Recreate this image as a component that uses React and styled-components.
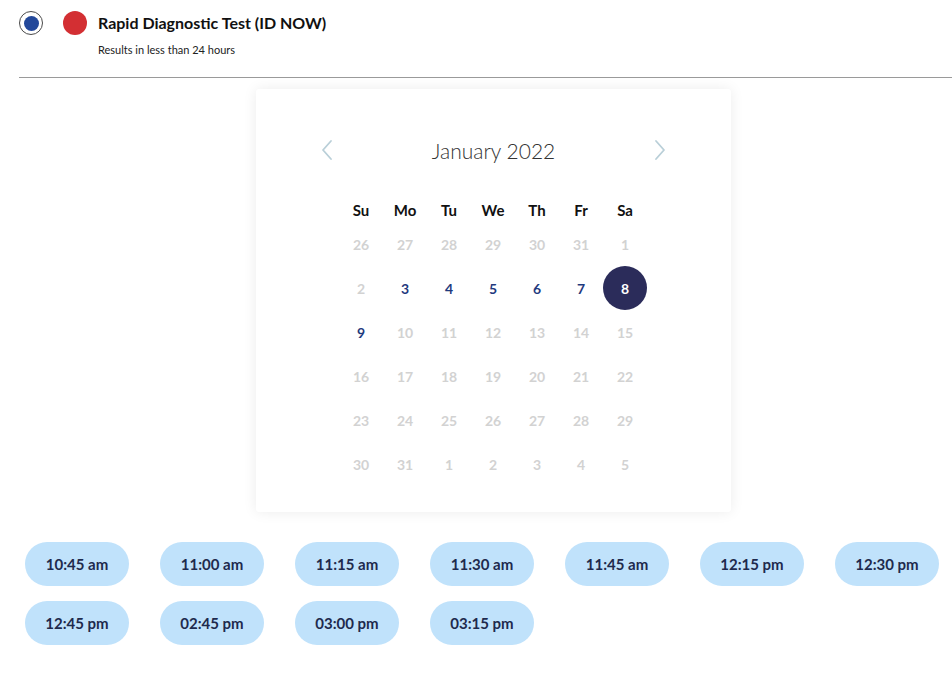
import styled, { createGlobalStyle } from "styled-components";

const GlobalStyle = createGlobalStyle`
  body {
    margin: 0;
    background: #ffffff;
    font-family: "Source Sans Pro", Lato, "Liberation Sans", sans-serif;
    color: #111;
  }
`;

// Test option header
const OptionRow = styled.div`
  display: flex;
  align-items: flex-start;
  padding: 11px 0 0 19px;
`;

const Radio = styled.span`
  box-sizing: border-box;
  width: 24px;
  height: 24px;
  border-radius: 50%;
  border: 1.5px solid #4a4a4a;
  display: flex;
  align-items: center;
  justify-content: center;
  flex-shrink: 0;

  &::after {
    content: "";
    width: 15px;
    height: 15px;
    border-radius: 50%;
    background: #23489a;
  }
`;

const Dot = styled.span`
  width: 24px;
  height: 24px;
  border-radius: 50%;
  background: #d32f33;
  margin-left: 20px;
  flex-shrink: 0;
`;

const OptionText = styled.div`
  margin-left: 11px;
`;

const Title = styled.div`
  font-size: 16px;
  font-weight: 700;
  line-height: 24px;
  color: #111;
`;

const Subtitle = styled.div`
  font-size: 11px;
  line-height: 14px;
  margin-top: 8px;
  color: #222;
`;

const Divider = styled.hr`
  border: none;
  border-top: 1px solid #9a9a9a;
  margin: 20px 0 0 19px;
`;

// Calendar
const CardWrap = styled.div`
  padding: 11px 0 0 256px;
`;

const Card = styled.div`
  width: 475px;
  box-sizing: border-box;
  padding: 39px 83px 26px;
  background: #fff;
  border-radius: 3px;
  box-shadow: 0 0 14px rgba(0, 0, 0, 0.08);
`;

const MonthHeader = styled.div`
  height: 44px;
  display: flex;
  align-items: center;
  justify-content: space-between;
`;

const NavButton = styled.button`
  border: none;
  background: none;
  padding: 0;
  width: 14px;
  height: 22px;
  display: flex;
  align-items: center;
  justify-content: center;
  margin: 0 ${(p) => p.$edge}px;
  cursor: pointer;
`;

const MonthLabel = styled.div`
  font-size: 21px;
  font-weight: 300;
  color: #333;
`;

const Grid = styled.div`
  display: grid;
  grid-template-columns: repeat(7, 44px);
  grid-auto-rows: 44px;
`;

const WeekRow = styled(Grid)`
  grid-auto-rows: 25px;
  margin-top: 25px;
`;

const WeekDay = styled.div`
  display: flex;
  align-items: center;
  justify-content: center;
  font-size: 15px;
  font-weight: 700;
  color: #111;
`;

const Day = styled.div`
  display: flex;
  align-items: center;
  justify-content: center;
  border-radius: 50%;
  font-size: 14px;
  font-weight: 700;
  color: ${(p) => (p.$selected ? "#fff" : p.$active ? "#1f3a7e" : "#d2d2d2")};
  background: ${(p) => (p.$selected ? "#2b2c5a" : "transparent")};
`;

// Time slots
const Slots = styled.div`
  display: flex;
  flex-wrap: wrap;
  column-gap: 31px;
  row-gap: 15px;
  padding: 30px 0 0 25px;
`;

const Slot = styled.button`
  width: 104px;
  height: 44px;
  border: none;
  border-radius: 22px;
  background: #c0e2fb;
  color: #1e2a4d;
  font-family: inherit;
  font-size: 15px;
  font-weight: 700;
  cursor: pointer;
`;

function Chevron({ dir }) {
  return (
    <svg width="12" height="22" viewBox="0 0 12 22" fill="none">
      <polyline
        points={dir === "left" ? "10,2 2,11 10,20" : "2,2 10,11 2,20"}
        stroke="#b9cfd8"
        strokeWidth="1.8"
        strokeLinecap="round"
        strokeLinejoin="round"
      />
    </svg>
  );
}

const weekDays = ["Su", "Mo", "Tu", "We", "Th", "Fr", "Sa"];

const days = [
  26, 27, 28, 29, 30, 31, 1,
  2, 3, 4, 5, 6, 7, 8,
  9, 10, 11, 12, 13, 14, 15,
  16, 17, 18, 19, 20, 21, 22,
  23, 24, 25, 26, 27, 28, 29,
  30, 31, 1, 2, 3, 4, 5,
];

const activeIdx = [8, 9, 10, 11, 12, 14];
const selectedIdx = 13;

const times = [
  "10:45 am",
  "11:00 am",
  "11:15 am",
  "11:30 am",
  "11:45 am",
  "12:15 pm",
  "12:30 pm",
  "12:45 pm",
  "02:45 pm",
  "03:00 pm",
  "03:15 pm",
];

export default function App() {
  return (
    <>
      <GlobalStyle />
      <OptionRow>
        <Radio />
        <Dot />
        <OptionText>
          <Title>Rapid Diagnostic Test (ID NOW)</Title>
          <Subtitle>Results in less than 24 hours</Subtitle>
        </OptionText>
      </OptionRow>
      <Divider />

      <CardWrap>
        <Card>
          <MonthHeader>
            <NavButton $edge={-19} aria-label="Previous month">
              <Chevron dir="left" />
            </NavButton>
            <MonthLabel>January 2022</MonthLabel>
            <NavButton $edge={-19} aria-label="Next month">
              <Chevron dir="right" />
            </NavButton>
          </MonthHeader>

          <WeekRow>
            {weekDays.map((d) => (
              <WeekDay key={d}>{d}</WeekDay>
            ))}
          </WeekRow>

          <Grid>
            {days.map((d, i) => (
              <Day
                key={i}
                $active={activeIdx.includes(i)}
                $selected={i === selectedIdx}
              >
                {d}
              </Day>
            ))}
          </Grid>
        </Card>
      </CardWrap>

      <Slots>
        {times.map((t) => (
          <Slot key={t}>{t}</Slot>
        ))}
      </Slots>
    </>
  );
}
